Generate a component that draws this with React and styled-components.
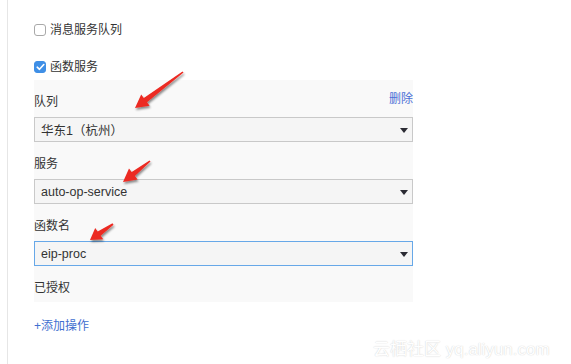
import React from "react";
import styled, { createGlobalStyle } from "styled-components";

const Global = createGlobalStyle`
  html, body { margin: 0; padding: 0; background: #fff; }
  body {
    font-family: "Liberation Sans", "Noto Sans CJK SC", sans-serif;
    font-size: 12px;
    color: #333;
  }
`;

const Page = styled.div`
  position: relative;
  width: 571px;
  height: 364px;
  overflow: hidden;
  padding-left: 7px;
  box-sizing: border-box;
`;

const Content = styled.div`
  height: 100%;
  border-left: 1px solid #e6e6e6;
  padding: 20px 0 0 26px;
  box-sizing: border-box;
  width: 406px;
`;

const CheckRow = styled.label`
  display: flex;
  align-items: center;
  gap: 4px;
  height: 20px;
  line-height: 20px;
  font-size: 12px;
  margin-bottom: ${(p) => p.$mb || 0}px;
`;

const Box = styled.span`
  width: 12px;
  height: 12px;
  box-sizing: border-box;
  border-radius: 3px;
  border: 1px solid ${(p) => (p.$checked ? "#3f8fe6" : "#a9a9a9")};
  background: ${(p) => (p.$checked ? "#3f8fe6" : "#fff")};
  display: flex;
  align-items: center;
  justify-content: center;
`;

const Panel = styled.div`
  margin-top: 3px;
  background: #f9f9f9;
  width: 379px;
  padding: 12px 0 4px;
  display: flex;
  flex-direction: column;
  gap: 12px;
`;

const Field = styled.div`
  display: flex;
  flex-direction: column;
  gap: 5px;
`;

const LabelRow = styled.div`
  display: flex;
  justify-content: space-between;
  align-items: center;
  height: 20px;
  line-height: 20px;
`;

const Label = styled.span`
  color: #333;
`;

const DeleteLink = styled.a`
  color: #4b6fd6;
  margin-top: -6px;
  cursor: pointer;
`;

const Select = styled.div`
  height: 25px;
  box-sizing: border-box;
  border: 1px solid ${(p) => (p.$focus ? "#67a8e8" : "#c9c9c9")};
  background: #f5f5f5;
  display: flex;
  align-items: center;
  justify-content: space-between;
  padding: 0 4px 0 6px;
  color: #333;
  font-size: 12.5px;
`;

const Caret = styled.span`
  width: 0;
  height: 0;
  border-left: 4.5px solid transparent;
  border-right: 4.5px solid transparent;
  border-top: 5px solid #2b2b33;
  margin-top: 1px;
`;

const Authorized = styled.div`
  height: 20px;
  line-height: 20px;
`;

const AddLink = styled.a`
  display: block;
  margin-top: 14px;
  height: 20px;
  line-height: 20px;
  color: #3f6fd0;
  cursor: pointer;
`;

const Overlay = styled.svg`
  position: absolute;
  left: 0;
  top: 0;
  pointer-events: none;
`;

const Watermark = styled.div`
  position: absolute;
  left: 373px;
  top: 335px;
  font-size: 17px;
  color: #fff;
  text-shadow: 0 0 1px rgba(0, 0, 0, 0.16), 0 0 2px rgba(0, 0, 0, 0.08);
  white-space: nowrap;
`;

function arrowPoints(x1, y1, x2, y2) {
  const dx = x2 - x1;
  const dy = y2 - y1;
  const L = Math.hypot(dx, dy);
  const ux = dx / L;
  const uy = dy / L;
  const nx = -uy;
  const ny = ux;
  const headLen = Math.min(13, L * 0.4);
  const bx = x2 - ux * headLen;
  const by = y2 - uy * headLen;
  const pts = [
    [x1 + nx * 0.8, y1 + ny * 0.8],
    [bx + nx * 2.6, by + ny * 2.6],
    [bx + nx * 7, by + ny * 7],
    [x2, y2],
    [bx - nx * 7, by - ny * 7],
    [bx - nx * 2.6, by - ny * 2.6],
    [x1 - nx * 0.8, y1 - ny * 0.8],
  ];
  return pts.map((p) => p.map((v) => v.toFixed(1)).join(",")).join(" ");
}

const arrows = [
  [183, 72, 135, 108],
  [150, 161, 123, 182],
  [113, 224, 90, 240],
];

function Check({ checked }) {
  return (
    <Box $checked={checked}>
      {checked && (
        <svg width="9" height="8" viewBox="0 0 9 8">
          <path d="M1.2 4.2 L3.5 6.3 L7.8 1.5" fill="none" stroke="#fff" strokeWidth="1.6" strokeLinecap="round" strokeLinejoin="round" />
        </svg>
      )}
    </Box>
  );
}

export default function App() {
  return (
    <>
      <Global />
      <Page>
        <Content>
          <CheckRow $mb={17}>
            <Check />
            <span>消息服务队列</span>
          </CheckRow>
          <CheckRow>
            <Check checked />
            <span>函数服务</span>
          </CheckRow>
          <Panel>
            <Field>
              <LabelRow>
                <Label>队列</Label>
                <DeleteLink>删除</DeleteLink>
              </LabelRow>
              <Select>
                <span>华东1（杭州）</span>
                <Caret />
              </Select>
            </Field>
            <Field>
              <LabelRow>
                <Label>服务</Label>
              </LabelRow>
              <Select>
                <span>auto-op-service</span>
                <Caret />
              </Select>
            </Field>
            <Field>
              <LabelRow>
                <Label>函数名</Label>
              </LabelRow>
              <Select $focus>
                <span>eip-proc</span>
                <Caret />
              </Select>
            </Field>
            <Authorized>已授权</Authorized>
          </Panel>
          <AddLink>+添加操作</AddLink>
        </Content>
        <Overlay width="571" height="364" viewBox="0 0 571 364">
          <defs>
            <filter id="shadow" x="-30%" y="-30%" width="160%" height="160%">
              <feDropShadow dx="1" dy="2" stdDeviation="1.3" floodColor="#000" floodOpacity="0.45" />
            </filter>
          </defs>
          {arrows.map((a, i) => (
            <polygon key={i} points={arrowPoints(...a)} fill="#ec2a22" filter="url(#shadow)" />
          ))}
        </Overlay>
        <Watermark>云栖社区 yq.aliyun.com</Watermark>
      </Page>
    </>
  );
}
